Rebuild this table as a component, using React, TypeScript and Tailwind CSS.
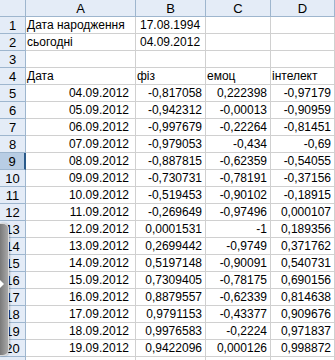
import React from "react";

type Row = [string, string, string, string];

const rows: Row[] = [
  ["Дата народження", "17.08.1994", "", ""],
  ["сьогодні", "04.09.2012", "", ""],
  ["", "", "", ""],
  ["Дата", "фіз", "емоц", "інтелект"],
  ["04.09.2012", "-0,817058", "0,222398", "-0,97179"],
  ["05.09.2012", "-0,942312", "-0,00013", "-0,90959"],
  ["06.09.2012", "-0,997679", "-0,22264", "-0,81451"],
  ["07.09.2012", "-0,979053", "-0,434", "-0,69"],
  ["08.09.2012", "-0,887815", "-0,62359", "-0,54055"],
  ["09.09.2012", "-0,730731", "-0,78191", "-0,37156"],
  ["10.09.2012", "-0,519453", "-0,90102", "-0,18915"],
  ["11.09.2012", "-0,269649", "-0,97496", "0,000107"],
  ["12.09.2012", "0,0001531", "-1", "0,189356"],
  ["13.09.2012", "0,2699442", "-0,9749", "0,371762"],
  ["14.09.2012", "0,5197148", "-0,90091", "0,540731"],
  ["15.09.2012", "0,7309405", "-0,78175", "0,690156"],
  ["16.09.2012", "0,8879557", "-0,62339", "0,814638"],
  ["17.09.2012", "0,9791153", "-0,43377", "0,909676"],
  ["18.09.2012", "0,9976583", "-0,2224", "0,971837"],
  ["19.09.2012", "0,9422096", "0,000126", "0,998872"],
  ["", "", "", ""],
];

const cols = "grid grid-cols-[26px_110px_70px_65px_64px]";
const cell = "flex items-center border-r border-b border-[#d0d0d0] overflow-hidden whitespace-nowrap leading-none";

export default function App() {
  return (
    <div
      className="relative w-[335px] h-[360px] overflow-hidden bg-white text-[12px] text-black"
      style={{ fontFamily: '"Liberation Sans", Arial, sans-serif' }}
    >
      {/* Column headers */}
      <div className={`${cols} h-[17px] bg-[#e4ecf7]`}>
        <div className="border-r border-b border-[#9eb6ce]" />
        {["A", "B", "C", "D"].map((c) => (
          <div
            key={c}
            className="flex items-center justify-center border-r border-b border-[#9eb6ce] text-[13px] leading-none"
          >
            {c}
          </div>
        ))}
      </div>

      {/* Rows */}
      {rows.map((r, i) => {
        const n = i + 1;
        const isText = n <= 4;
        const selected = n === 9;
        return (
          <div key={n} className={`${cols} h-[17px]`}>
            <div
              className={`flex items-center justify-center border-b text-[13px] leading-none ${
                selected
                  ? "bg-[#b8cde4] border-r-2 border-r-[#2a5a8a] border-b-[#9eb6ce]"
                  : "bg-[#e4ecf7] border-r border-[#9eb6ce]"
              }`}
            >
              {n <= 20 ? n : ""}
            </div>
            <div className={`${cell} ${isText ? "justify-start pl-[1px]" : "justify-end pr-[6px]"}`}>
              {r[0]}
            </div>
            <div
              className={`${cell} ${
                isText ? (n <= 2 ? "justify-start pl-[4px]" : "justify-start pl-[1px]") : "justify-end pr-[3px]"
              }`}
            >
              {r[1]}
            </div>
            <div className={`${cell} ${isText ? "justify-start pl-[1px]" : "justify-end pr-[3px]"}`}>
              {r[2]}
            </div>
            <div className={`${cell} ${isText ? "justify-start pl-[1px]" : "justify-end pr-[3px]"}`}>
              {r[3]}
            </div>
          </div>
        );
      })}

      {/* Collapsed side panel tab */}
      <div className="absolute left-0 top-[223px] w-[9px] h-[133px] rounded-r-[6px] bg-gradient-to-r from-[#7a7a7a] to-[#a8a8a8] border border-l-0 border-[#d8d8d8] shadow-[1px_0_2px_rgba(0,0,0,0.25)]">
        <svg width="5" height="8" viewBox="0 0 5 8" className="absolute left-0 top-[56px]">
          <path d="M0 0 L4 4 L0 8 Z" fill="#ffffff" />
        </svg>
      </div>
    </div>
  );
}
